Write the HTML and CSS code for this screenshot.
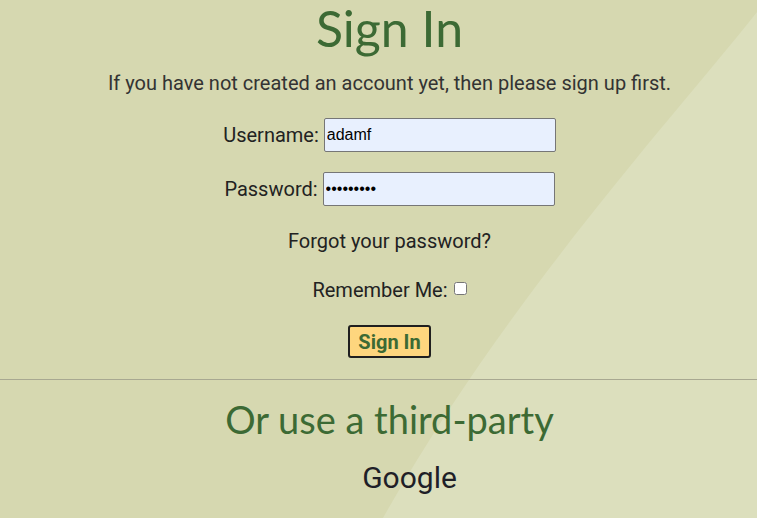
FILE: index.html
```html
<!DOCTYPE html>
<html>
<head>
<meta charset="utf-8">
<link rel="stylesheet" href="styles.css">
</head>
<body>
<svg class="bg-shape" viewBox="0 0 757 518" preserveAspectRatio="none" aria-hidden="true">
  <path d="M757 12 C 680 110, 505 300, 383 518 L757 518 Z" fill="#dcdfbd"/>
</svg>
<main class="page">
  <section class="signin">
    <h1 class="title">Sign In</h1>
    <p class="intro">If you have not created an account yet, then please sign up first.</p>
    <form class="form">
      <div class="row">
        <label class="label" for="u">Username:</label>
        <input class="field" id="u" type="text" value="adamf">
      </div>
      <div class="row">
        <label class="label" for="p">Password:</label>
        <input class="field" id="p" type="password" value="secretpwd">
      </div>
      <a class="forgot">Forgot your password?</a>
      <div class="row remember">
        <label class="label" for="r">Remember Me:</label>
        <input class="check" id="r" type="checkbox">
      </div>
      <button class="btn" type="button">Sign In</button>
    </form>
  </section>
  <hr class="divider">
  <section class="third">
    <h2 class="subtitle">Or use a third-party</h2>
    <ul class="providers">
      <li class="provider">Google</li>
    </ul>
  </section>
</main>
</body>
</html>
```
FILE: styles.css
```css
html, body {
  margin: 0;
  padding: 0;
  height: 100%;
  overflow: hidden;
}
body {
  background: #d6d8b0;
  font-family: Roboto, "Liberation Sans", sans-serif;
  color: #262626;
  position: relative;
}
.bg-shape {
  position: absolute;
  left: 0;
  top: 0;
  width: 757px;
  height: 518px;
  z-index: 0;
}
.page {
  position: relative;
  z-index: 1;
}
.signin, .third {
  display: flex;
  flex-direction: column;
  align-items: center;
  padding-left: 22px;
}
.title {
  font-family: Lato, "Open Sans", sans-serif;
  font-weight: 400;
  font-size: 50px;
  line-height: 56px;
  color: #3c6a34;
  margin: 0;
}
.intro {
  font-size: 20px;
  line-height: 24px;
  margin: 15px 0 0;
  color: #333;
}
.form {
  display: flex;
  flex-direction: column;
  align-items: center;
  margin-top: 23px;
}
.row {
  display: flex;
  align-items: center;
  height: 34px;
  margin-bottom: 20px;
}
.label {
  font-size: 20px;
  margin-right: 5px;
  color: #222;
}
.field {
  width: 232px;
  height: 34px;
  box-sizing: border-box;
  background: #e8f0fe;
  border: 1px solid #767676;
  border-radius: 2px;
  padding: 0 2px;
  font-family: "Liberation Sans", Arial, sans-serif;
  font-size: 16px;
  color: #000;
}
.forgot {
  font-size: 20px;
  line-height: 24px;
  color: #222;
  margin: 3px 0 25px;
}
.remember {
  height: 24px;
  margin-bottom: 0;
}
.remember .label {
  margin-right: 6px;
}
.check {
  width: 13px;
  height: 13px;
  margin: 0 0 3px 0;
}
.btn {
  margin-top: 23px;
  width: 83px;
  height: 33px;
  background: #fed67e;
  border: 2px solid #1f1f1f;
  border-radius: 3px;
  font-family: Roboto, sans-serif;
  font-weight: 700;
  font-size: 20px;
  color: #3c6a34;
  padding: 0;
}
.divider {
  margin: 21px 0 0;
  border: 0;
  border-top: 1px solid #a8a891;
  height: 0;
}
.subtitle {
  font-family: Lato, "Open Sans", sans-serif;
  font-weight: 400;
  font-size: 38px;
  line-height: 48px;
  color: #3c6a34;
  margin: 15px 0 0;
}
.providers {
  list-style: none;
  margin: 17px 0 0;
  padding: 0 0 0 40px;
}
.provider {
  font-size: 30px;
  line-height: 36px;
  color: #1f1f28;
}
```
